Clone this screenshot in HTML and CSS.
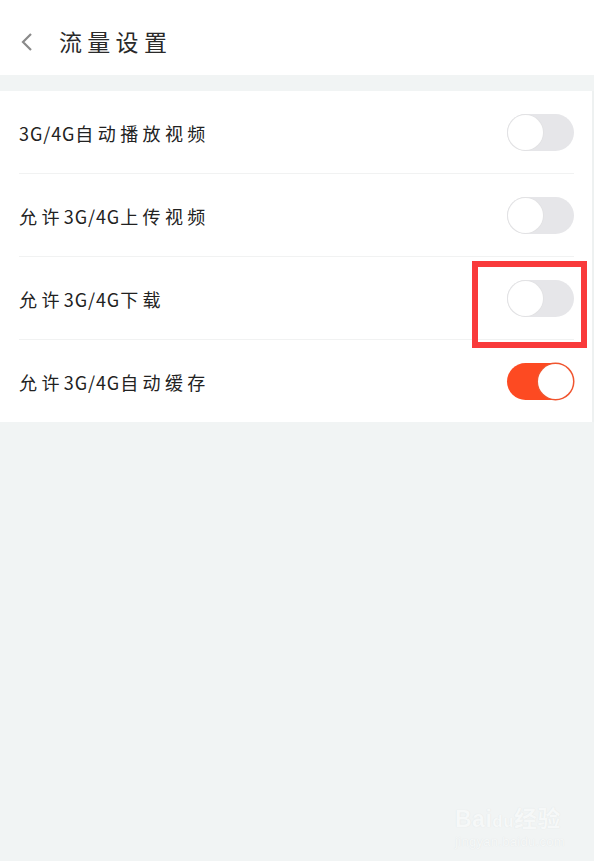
FILE: index.html
```html
<!DOCTYPE html>
<html lang="zh-CN">
<head>
<meta charset="utf-8">
<title>流量设置</title>
<link rel="stylesheet" href="styles.css">
</head>
<body>
<div class="page">
  <header class="header">
    <svg class="back" width="12" height="20" viewBox="0 0 12 20"><polyline points="10,2 2,10 10,18" fill="none" stroke="#8a8a8a" stroke-width="2.2" stroke-linejoin="miter"/></svg>
    <h1 class="title">流量设置</h1>
  </header>
  <div class="gap"></div>
  <ul class="list">
    <li class="row">
      <span class="label"><span class="lat">3G/4G</span>自动播放视频</span>
      <span class="switch"><span class="knob"></span></span>
    </li>
    <li class="row">
      <span class="label">允许<span class="lat">3G/4G</span>上传视频</span>
      <span class="switch"><span class="knob"></span></span>
    </li>
    <li class="row">
      <span class="label">允许<span class="lat">3G/4G</span>下载</span>
      <span class="switch marked"><span class="knob"></span><span class="mark"></span></span>
    </li>
    <li class="row last">
      <span class="label">允许<span class="lat">3G/4G</span>自动缓存</span>
      <span class="switch on"><span class="knob"></span></span>
    </li>
  </ul>
  <div class="watermark">
    <div class="wm-logo">Bai<span class="wm-du">du</span>经验</div>
    <div class="wm-url">jingyan.baidu.com</div>
  </div>
</div>
</body>
</html>
```

FILE: styles.css
```css
html, body {
  margin: 0;
  padding: 0;
  background: #f1f4f4;
  font-family: "Noto Sans CJK SC", "Noto Sans", sans-serif;
}
.page {
  position: relative;
  width: 594px;
  height: 861px;
  overflow: hidden;
}
.header {
  height: 75px;
  background: #ffffff;
  display: flex;
  align-items: center;
  padding-top: 8px;
  box-sizing: border-box;
}
.back {
  margin-left: 21px;
  display: block;
}
.title {
  margin: 0 0 0 26px;
  font-size: 23px;
  font-weight: 400;
  letter-spacing: 5.3px;
  color: #2a2a2a;
  line-height: 1;
}
.gap {
  height: 16px;
}
.list {
  list-style: none;
  margin: 0;
  padding: 0;
  background: #ffffff;
  border-right: 2px solid #eef1f1;
}
.row {
  margin: 0 18px 0 19px;
  height: 82px;
  display: flex;
  align-items: center;
  justify-content: space-between;
  border-bottom: 1px solid #f1f2f2;
}
.row.last {
  border-bottom: none;
}
.label {
  font-size: 18px;
  letter-spacing: 4.4px;
  color: #222222;
  line-height: 1;
  padding-top: 2px;
}
.lat {
  letter-spacing: 0.9px;
}
.switch {
  position: relative;
  width: 67px;
  height: 37px;
  border-radius: 19px;
  background: #e6e6e9;
  box-sizing: border-box;
  margin-top: 1px;
}
.knob {
  position: absolute;
  left: 1px;
  top: 1px;
  width: 35px;
  height: 35px;
  border-radius: 50%;
  background: #ffffff;
  box-shadow: 0 0 0 1px #e2e2e4;
}
.switch.on {
  background: #fd4a22;
}
.switch.on .knob {
  left: 31px;
  box-shadow: 0 0 0 1.5px #f0552f;
}
.mark {
  position: absolute;
  left: -35px;
  top: -19px;
  width: 115px;
  height: 87px;
  border: 6px solid #f93a3b;
  box-sizing: border-box;
}
.watermark {
  position: absolute;
  left: 455px;
  top: 807px;
  color: #f6f8f8;
  text-shadow: 0 0 1px #dde1e1;
  font-family: "Liberation Sans", "Noto Sans CJK SC", sans-serif;
}
.wm-logo {
  font-size: 23px;
  font-weight: 700;
  line-height: 24px;
  letter-spacing: 0.5px;
}
.wm-du {
  font-size: 17px;
}
.wm-url {
  font-size: 13px;
  line-height: 16px;
  letter-spacing: 0.3px;
}
```
